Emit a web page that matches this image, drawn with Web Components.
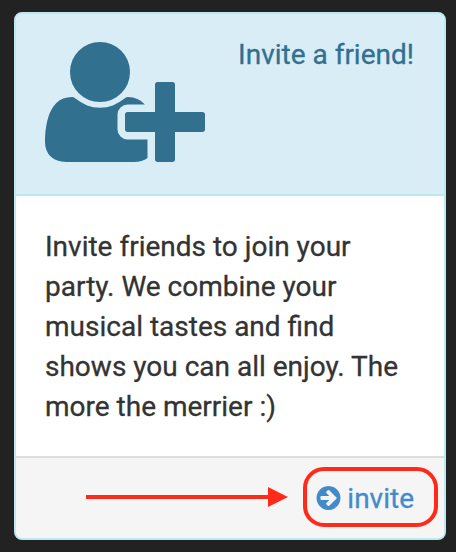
<!DOCTYPE html>
<html lang="en"><head><meta charset="utf-8"><title>Invite a friend</title>
<style>html,body{margin:0;height:100%;overflow:hidden;background:#222}body{font-family:Roboto,"Liberation Sans",sans-serif;font-size:28px;line-height:40px;color:#333;-webkit-text-stroke:.3px}</style></head>
<body>
<info-panel>
  <user-plus-icon slot="icon"></user-plus-icon>
  <span slot="title">Invite a friend!</span>
  Invite friends to join your party. We combine your musical tastes and find shows you can all enjoy. The more the merrier :)
  <action-link slot="footer">invite</action-link>
</info-panel>
<callout-marks></callout-marks>
<script>
const define = (name, html) => customElements.define(name, class extends HTMLElement {
  constructor() { super(); this.attachShadow({mode: 'open'}).innerHTML = html; }
});

define('user-plus-icon', `<style>:host{display:block;width:160px;height:140px}svg{display:block}</style>
<svg width="160" height="140" viewBox="0 0 2048 1792" fill="#31708f"><path d="M704 896q-159 0-271.5-112.5t-112.5-271.5 112.5-271.5 271.5-112.5 271.5 112.5 112.5 271.5-112.5 271.5-271.5 112.5zm960 128h352q13 0 22.5 9.5t9.5 22.5v192q0 13-9.5 22.5t-22.5 9.5h-352v352q0 13-9.5 22.5t-22.5 9.5h-192q-13 0-22.5-9.5t-9.5-22.5v-352h-352q-13 0-22.5-9.5t-9.5-22.5v-192q0-13 9.5-22.5t22.5-9.5h352v-352q0-13 9.5-22.5t22.5-9.5h192q13 0 22.5 9.5t9.5 22.5v352zm-736 224q0 52 38 90t90 38h256v238q-68 50-171 50h-874q-121 0-194-69t-73-190q0-53 3.5-103.5t14-109 26.5-108.5 43-97.5 62-81 85.5-53.5 111.5-20q19 0 39 17 79 61 154.5 91.5t164.5 30.5 164.5-30.5 154.5-91.5q20-17 39-17 132 0 217 96h-223q-52 0-90 38t-38 90v192z"/></svg>`);

define('action-link', `<style>:host{display:flex;align-items:flex-start;gap:7px;color:#428bca}svg{display:block;margin-top:7px}</style>
<svg width="24" height="24" viewBox="96 128 1536 1536" overflow="visible" fill="currentColor"><path d="M1413 896q0-27-18-45l-91-91-362-362q-18-18-45-18t-45 18l-91 91q-18 18-18 45t18 45l189 189h-502q-26 0-45 19t-19 45v128q0 26 19 45t45 19h502l-189 189q-19 19-19 45t19 45l91 91q18 18 45 18t45-18l362-362 91-91q18-18 18-45zm251 0q0 209-103 385.5t-279.5 279.5-385.5 103-385.5-103-279.5-279.5-103-385.5 103-385.5 279.5-279.5 385.5-103 385.5 103 279.5 279.5 103 385.5z"/></svg><slot></slot>`);

define('info-panel', `<style>
:host{display:flex;flex-direction:column;box-sizing:border-box;width:432px;height:528px;margin:12px 0 0 14px;border:2px solid #bce8f1;border-radius:8px;background:#fff;overflow:hidden}
header{display:flex;justify-content:space-between;box-sizing:border-box;height:182px;padding:21px 30px 0 29px;background:#d9edf7;border-bottom:2px solid #bce8f1;color:#31708f}
slot[name=icon]::slotted(*){margin-top:-3px}
main{flex:1;padding:31px 28px 0 29px}
footer{display:flex;justify-content:flex-end;box-sizing:border-box;height:82px;padding:21px 30px 19px;background:#f5f5f5;border-top:2px solid #ddd}
</style>
<header><slot name="icon"></slot><slot name="title"></slot></header><main><slot></slot></main><footer><slot name="footer"></slot></footer>`);

define('callout-marks', `<style>:host{position:absolute;left:86px;top:467px;width:352px;height:60px;pointer-events:none}svg{display:block}</style>
<svg width="352" height="60" viewBox="0 0 352 60"><path d="M0 28H182V20L202 30 182 40V32H0Z" fill="#ff2a1a"/><rect x="219" y="2" width="131" height="56" rx="19" fill="none" stroke="#ff2a1a" stroke-width="4"/></svg>`);
</script>
</body></html>
